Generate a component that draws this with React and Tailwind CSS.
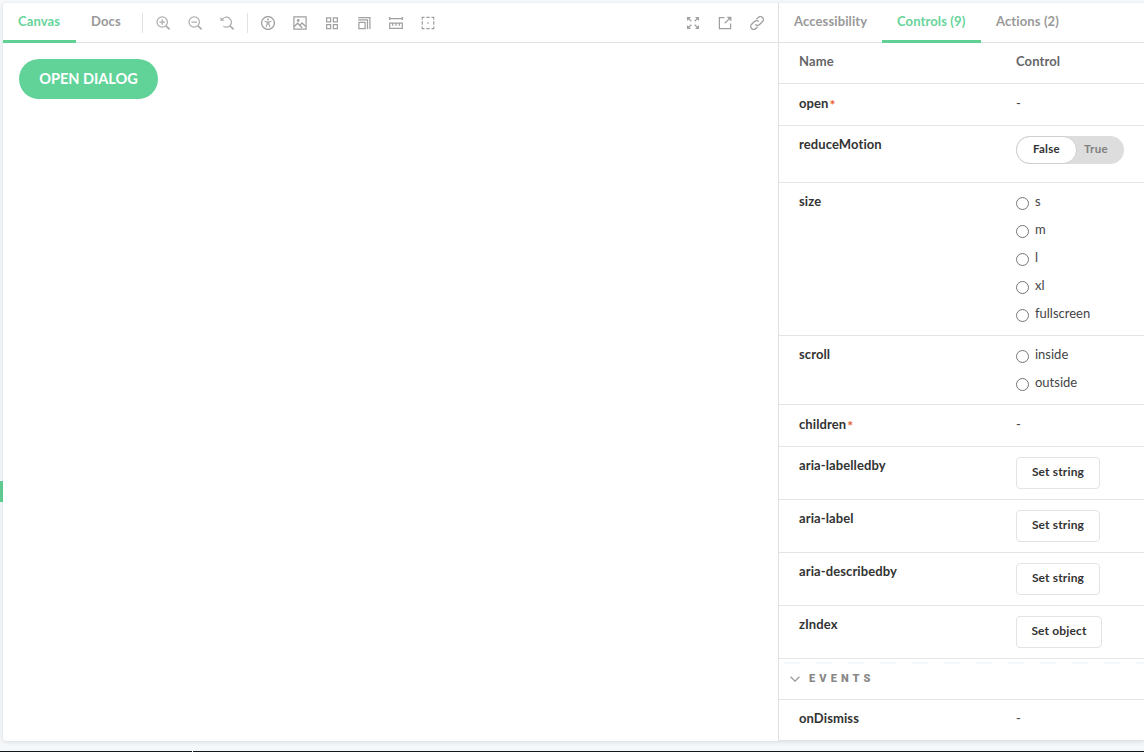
import React from "react";

function Icon({ children, className = "" }) {
  return (
    <svg
      viewBox="0 0 14 14"
      className={`h-[14px] w-[14px] shrink-0 ${className}`}
      fill="none"
      stroke="currentColor"
      strokeWidth="1.25"
    >
      {children}
    </svg>
  );
}

const ZoomIn = () => (
  <Icon>
    <circle cx="6.2" cy="6" r="5.2" />
    <path d="M3.5 6h5.4M6.2 3.3v5.4" />
    <path d="M10 9.8l3.6 3.6" strokeWidth="1.7" />
  </Icon>
);
const ZoomOut = () => (
  <Icon>
    <circle cx="6.2" cy="6" r="5.2" />
    <path d="M3.5 6h5.4" />
    <path d="M10 9.8l3.6 3.6" strokeWidth="1.7" />
  </Icon>
);
const ZoomReset = () => (
  <Icon>
    <path d="M2.4 3.2A5 5 0 1 1 3.4 10.2" />
    <path d="M.5 1v3.8h4z" fill="currentColor" stroke="none" />
    <path d="M10 9.8l3.6 3.6" strokeWidth="1.7" />
  </Icon>
);
const Vision = () => (
  <Icon>
    <circle cx="7" cy="7" r="6.4" />
    <circle cx="7" cy="3.5" r="1" fill="currentColor" stroke="none" />
    <path d="M3.6 5.3L6 6h2l2.4-.7M6.1 6v2L5 11.2M7.9 6v2L9 11.2M6.1 8h1.8" strokeWidth="1" />
  </Icon>
);
const Photo = () => (
  <Icon>
    <path d="M.9.9h12.2v12.2H.9z" />
    <path d="M1 10.8l3.6-3.6 4.6 4.6M7 9.2l2-2.2 4 3.8" />
    <circle cx="5.2" cy="4.5" r=".8" />
  </Icon>
);
const Grid = () => (
  <Icon>
    <path d="M1.6 1.9h4v4h-4zM8.4 1.9h4v4h-4zM1.6 8.5h4v4h-4zM8.4 8.5h4v4h-4z" />
  </Icon>
);
const Viewport = () => (
  <Icon>
    <path d="M1.9 6.4h6.2v6.1H1.9zM1.2 3.9h9.3V13M1.2 1.5h11.7V13" />
  </Icon>
);
const Ruler = () => (
  <Icon>
    <path d="M.7 2.5h12.6M.7 1v3M13.3 1v3M.7 7.2h12.6v5.2H.7zM3.7 7.2v2.6M7 7.2v2.6M10.3 7.2v2.6" />
  </Icon>
);
const Outline = () => (
  <Icon>
    <path d="M3.5 1.3H1.3v2.2M10.5 1.3h2.2v2.2M3.5 12.7H1.3v-2.2M10.5 12.7h2.2v-2.2M5.3 1.3h3.4M5.3 12.7h3.4M1.3 5.3v3.4M12.7 5.3v3.4" />
    <path d="M6.3 7h1.4" strokeWidth="1.4" />
  </Icon>
);
const Expand = () => (
  <Icon>
    <path d="M1 1h4L1 5zM13 1H9l4 4zM1 13h4L1 9zM13 13H9l4-4z" fill="currentColor" stroke="none" />
    <path d="M2 2l3.3 3.3M12 2L8.7 5.3M2 12l3.3-3.3M12 12L8.7 8.7" />
  </Icon>
);
const Share = () => (
  <Icon>
    <path d="M6.5 1.5H1.4v11.2h11.2V7.5M12.6 1.4L6.8 7.2" />
    <path d="M8.6.8h4.8v4.8z" fill="currentColor" stroke="none" />
  </Icon>
);
const Link = () => (
  <Icon>
    <path d="M6.3 3.4L8.2 1.5a2.9 2.9 0 0 1 4.2 4.2L9.6 8.5a2.9 2.9 0 0 1-4.3-.2M7.7 10.6l-1.9 1.9a2.9 2.9 0 0 1-4.2-4.2l2.8-2.8a2.9 2.9 0 0 1 4.3.2" />
  </Icon>
);

const Tab = ({ children, active, className }) => (
  <button
    className={`h-10 border-b-[3px] pb-px text-left text-[13px] leading-3 font-bold tracking-[0.12px] whitespace-nowrap ${
      active ? "border-[#61d095] text-[#66d49a]" : "border-transparent text-[#999999]"
    } ${className}`}
  >
    {children}
  </button>
);

const Row = ({ name, required, className, children }) => (
  <div className={`flex border-b border-[#e4e4e4] pl-5 ${className}`}>
    <div className="flex w-[217px] shrink-0 text-[13px] leading-5 font-bold tracking-[0.1px] text-[#333333]">
      <span>{name}</span>
      {required && <span className="ml-px pt-[2px] text-[14px] text-[#e8602c]">*</span>}
    </div>
    <div className="text-[13px] leading-5 text-[#444444]">{children}</div>
  </div>
);

const Radios = ({ options }) => (
  <div className="flex flex-col gap-2">
    {options.map((label) => (
      <label key={label} className="flex h-5 items-center">
        <span className="mt-[5px] mr-[6px] h-[13px] w-[13px] rounded-full border border-[#767676] bg-white" />
        <span>{label}</span>
      </label>
    ))}
  </div>
);

const SetButton = ({ children, className }) => (
  <button
    className={`mt-[2px] h-8 rounded-[4px] border border-[#e3e3e3] bg-white pb-[2px] text-center text-[12px] leading-3 font-bold tracking-[0.15px] whitespace-nowrap text-[#333333] ${className}`}
  >
    {children}
  </button>
);

export default function App() {
  return (
    <div className="flex h-[752px] w-[1144px] flex-col overflow-hidden bg-[#f5f8fb] font-['Lato',sans-serif]">
      <div className="flex h-[741px] shrink-0">
        <div className="flex w-[3px] flex-col pt-[481px]">
          <div className="h-[21px] bg-[#61d095]" />
        </div>
        <div className="mt-[3px] flex h-[738px] w-[1141px] overflow-hidden rounded-l-[4px] bg-white shadow-[0_1px_4px_rgba(0,0,0,0.12)]">
          <main className="w-[775px] shrink-0">
            <div className="flex h-10 border-b border-[#e2e2e2] text-[#a0a0a0]">
              <Tab active className="w-[73px] pl-[15px]">Canvas</Tab>
              <Tab className="w-[58px] pl-[15px]">Docs</Tab>
              <div className="mt-[10px] ml-2 h-5 w-px bg-[#e2e2e2]" />
              <div className="flex gap-[18px] pt-[13px] pl-[13px] text-[#adadad]">
                <ZoomIn />
                <ZoomOut />
                <ZoomReset />
              </div>
              <div className="mt-[10px] ml-[13px] h-5 w-px bg-[#e2e2e2]" />
              <div className="flex gap-[18px] pt-[13px] pl-[13px]">
                <Vision />
                <Photo />
                <Grid />
                <Viewport />
                <Ruler />
                <Outline />
              </div>
              <div className="ml-auto flex gap-[18px] pt-[13px] pr-[14px]">
                <Expand />
                <Share />
                <Link />
              </div>
            </div>
            <button className="mt-4 ml-4 h-10 w-[139px] rounded-full bg-[#61d399] text-[14.5px] leading-4 font-bold whitespace-nowrap text-white">
              OPEN DIALOG
            </button>
          </main>

          <aside className="w-[366px] shrink-0 border-l border-[#e0e0e0]">
            <div className="flex h-10 border-b border-[#e2e2e2]">
              <Tab className="w-[103px] pl-[15px]">Accessibility</Tab>
              <Tab active className="w-[99px] pl-[15px]">Controls (9)</Tab>
              <Tab className="w-[94px] pl-[15px]">Actions (2)</Tab>
            </div>
            <div className="flex h-[41px] border-b border-[#e4e4e4] pt-2 pl-5 text-[13px] leading-5 font-bold tracking-[0.1px] text-[#666666]">
              <span className="w-[217px]">Name</span>
              <span>Control</span>
            </div>
            <Row name="open" required className="h-[42px] pt-[9px]">-</Row>
            <Row name="reduceMotion" className="h-[57px] pt-2">
              <div className="mt-[2px] flex h-7 w-[108px] items-center rounded-full bg-[#dddddd] text-[11.5px] font-bold tracking-[0.3px]">
                <span className="h-7 w-[61px] rounded-full border border-[#cfcfcf] bg-white text-center leading-[24px] text-[#333333]">
                  False
                </span>
                <span className="pb-[2px] pl-[7px] text-[#808080]">True</span>
              </div>
            </Row>
            <Row name="size" className="h-[153px] pt-2">
              <Radios options={["s", "m", "l", "xl", "fullscreen"]} />
            </Row>
            <Row name="scroll" className="h-[69px] pt-2">
              <Radios options={["inside", "outside"]} />
            </Row>
            <Row name="children" required className="h-[42px] pt-[9px]">-</Row>
            <Row name="aria-labelledby" className="h-[53px] pt-2">
              <SetButton className="w-[84px]">Set string</SetButton>
            </Row>
            <Row name="aria-label" className="h-[53px] pt-2">
              <SetButton className="w-[84px]">Set string</SetButton>
            </Row>
            <Row name="aria-describedby" className="h-[53px] pt-2">
              <SetButton className="w-[84px]">Set string</SetButton>
            </Row>
            <Row name="zIndex" className="h-[53px] pt-2">
              <SetButton className="w-[86px]">Set object</SetButton>
            </Row>
            <div className="h-[41px] border-b border-[#e4e4e4] pt-[3px]">
              <div className="flex h-[2px] gap-4 overflow-hidden pl-[5px]">
                {Array.from({ length: 12 }, (_, i) => (
                  <span key={i} className="w-4 shrink-0 bg-[#f5f8fb]" />
                ))}
              </div>
              <div className="flex items-center pt-[5px] pl-[11px]">
                <svg viewBox="0 0 10 6" className="mb-px h-[6px] w-[10px]" fill="none" stroke="#999999" strokeWidth="1.3">
                  <path d="M.6.7L5 5.1 9.4.7" />
                </svg>
                <span className="ml-[9px] font-['Roboto',sans-serif] text-[11px] leading-5 font-black tracking-[4.1px] text-[#888888]">
                  EVENTS
                </span>
              </div>
            </div>
            <Row name="onDismiss" className="h-[41px] pt-2">-</Row>
          </aside>
        </div>
      </div>
      <div className="mt-[10px] flex h-px">
        <div className="w-[192px] bg-[#15151c]" />
        <div className="w-px bg-white" />
        <div className="flex-1 bg-[#15151c]" />
      </div>
    </div>
  );
}
